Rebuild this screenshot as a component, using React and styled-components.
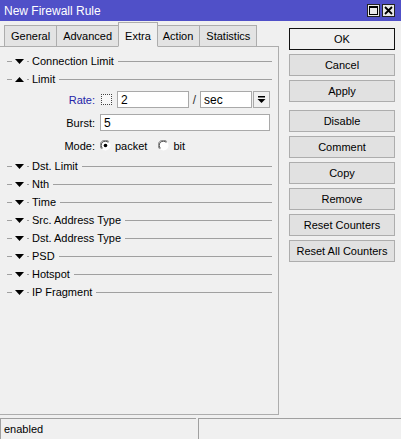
import React from 'react';
import styled, { createGlobalStyle } from 'styled-components';

const GlobalStyle = createGlobalStyle`
  html, body {
    margin: 0;
    padding: 0;
    background: #f0f0f0;
  }
  * {
    box-sizing: border-box;
  }
`;

const Window = styled.div`
  width: 401px;
  height: 439px;
  display: flex;
  flex-direction: column;
  background: #f0f0f0;
  font-family: 'Liberation Sans', Arial, sans-serif;
  font-size: 11px;
  color: #000;
  overflow: hidden;
`;

const TitleBar = styled.div`
  height: 21px;
  flex: none;
  display: flex;
  align-items: center;
  justify-content: space-between;
  padding: 0 6px 0 4px;
  background: #5050c8;
  color: #fff;
  font-size: 12px;
`;

const TitleButtons = styled.div`
  display: flex;
  gap: 2px;
`;

const TitleButton = styled.div`
  width: 13px;
  height: 13px;
  display: flex;
  align-items: center;
  justify-content: center;
  background: #e8e8e8;
  border: 1px solid #222;
`;

const Body = styled.div`
  flex: 1;
  display: flex;
  min-height: 0;
`;

const LeftColumn = styled.div`
  width: 279px;
  display: flex;
  flex-direction: column;
  padding-top: 1px;
`;

const TabStrip = styled.div`
  height: 25px;
  display: flex;
  align-items: flex-end;
  padding-left: 4px;
  position: relative;
  z-index: 1;
  margin-bottom: -1px;
`;

const Tab = styled.div`
  height: ${({ active }) => (active ? '25px' : '22px')};
  padding: ${({ active }) => (active ? '2px 6px 0' : '0 6px')};
  margin: ${({ active }) => (active ? '0 -1px' : '0')};
  display: flex;
  align-items: center;
  background: ${({ active }) => (active ? '#f0f0f0' : '#e3e3e3')};
  border: 1px solid #adadad;
  border-bottom: ${({ active }) => (active ? '1px solid #f0f0f0' : '1px solid #adadad')};
  border-left: ${({ first, active }) => (first || active ? '1px solid #adadad' : 'none')};
  position: relative;
  z-index: ${({ active }) => (active ? 2 : 1)};
`;

const Panel = styled.div`
  flex: 1;
  border: 1px solid #adadad;
  border-left: none;
  padding-top: 5px;
  display: flex;
  flex-direction: column;
`;

const SectionHead = styled.div`
  height: 18px;
  display: flex;
  align-items: center;
  padding: 0 6px 0 7px;
`;

const Dash = styled.div`
  width: ${({ w }) => w}px;
  height: 1px;
  background: #a0a0a0;
  margin: 0 ${({ mr }) => mr || 0}px 0 ${({ ml }) => ml || 0}px;
  flex: ${({ grow }) => (grow ? 1 : 'none')};
`;

const SectionTitle = styled.span`
  margin: 0 4px 0 3px;
  white-space: nowrap;
`;

const Field = styled.div`
  height: 23px;
  display: flex;
  align-items: center;
`;

const Label = styled.span`
  width: 96px;
  text-align: right;
  padding-right: 1px;
  color: ${({ blue }) => (blue ? '#2424a8' : '#000')};
  margin-right: 4px;
`;

const Input = styled.div`
  width: ${({ w }) => w}px;
  height: 17px;
  background: #fff;
  border: 1px solid #a9a9a9;
  padding: 1px 3px 0;
  display: flex;
  align-items: center;
  font-size: 12px;
`;

const DottedBox = styled.div`
  width: 11px;
  height: 11px;
  margin: 0 5px 0 1px;
  border: 1px dotted #444;
  background: #f7f7f7;
`;

const Slash = styled.span`
  width: 11px;
  text-align: center;
  color: #333;
  font-size: 12px;
`;

const DropButton = styled.div`
  width: 17px;
  height: 17px;
  margin-left: 1px;
  border: 1px solid #a9a9a9;
  background: #f0f0f0;
  display: flex;
  align-items: center;
  justify-content: center;
`;

const RadioLabel = styled.span`
  margin: 0 ${({ mr }) => mr || 0}px 0 4px;
`;

const ButtonColumn = styled.div`
  width: 106px;
  margin-left: 10px;
  padding-top: 7px;
  display: flex;
  flex-direction: column;
  gap: 4px;
`;

const Button = styled.div`
  height: 22px;
  display: flex;
  align-items: center;
  justify-content: center;
  background: ${({ primary }) => (primary ? '#f0f0f0' : '#e1e1e1')};
  border: 1px solid ${({ primary }) => (primary ? '#111' : '#adadad')};
  font-size: 11px;
  margin-top: ${({ spaced }) => (spaced ? '4px' : '0')};
`;

const StatusBar = styled.div`
  height: 21px;
  flex: none;
  display: flex;
  gap: 2px;
  margin-top: 3px;
`;

const StatusCell = styled.div`
  width: ${({ w }) => (w ? `${w}px` : 'auto')};
  flex: ${({ w }) => (w ? 'none' : 1)};
  border-top: 1px solid #a0a0a0;
  border-left: 1px solid #a0a0a0;
  padding-left: 3px;
  display: flex;
  align-items: center;
`;

const Arrow = ({ up }) => (
  <svg width="9" height="5" viewBox="0 0 9 5">
    <path d={up ? 'M4.5 0 L9 5 L0 5 Z' : 'M0 0 L9 0 L4.5 5 Z'} fill="#000" />
  </svg>
);

const Radio = ({ checked }) => (
  <svg width="11" height="11" viewBox="0 0 11 11">
    <circle cx="5.5" cy="5.5" r="5" fill="#fff" />
    <path d="M1.6 8.9 A5 5 0 0 1 8.9 1.6" fill="none" stroke="#808080" strokeWidth="1" />
    <path d="M2.4 8.3 A4 4 0 0 1 8.3 2.4" fill="none" stroke="#404040" strokeWidth="1" />
    {checked && <circle cx="5.5" cy="5.5" r="1.8" fill="#000" />}
  </svg>
);

const Section = ({ title, open }) => (
  <SectionHead>
    <Dash w={5} mr={3} />
    <Arrow up={open} />
    <Dash w={2} ml={3} />
    <SectionTitle>{title}</SectionTitle>
    <Dash grow />
  </SectionHead>
);

const tabs = ['General', 'Advanced', 'Extra', 'Action', 'Statistics'];
const lower = ['Dst. Limit', 'Nth', 'Time', 'Src. Address Type', 'Dst. Address Type', 'PSD', 'Hotspot', 'IP Fragment'];
const buttons = ['OK', 'Cancel', 'Apply', 'Disable', 'Comment', 'Copy', 'Remove', 'Reset Counters', 'Reset All Counters'];

export default function App() {
  return (
    <Window>
      <GlobalStyle />
      <TitleBar>
        <span>New Firewall Rule</span>
        <TitleButtons>
          <TitleButton>
            <svg width="9" height="9" viewBox="0 0 9 9">
              <rect x="0.5" y="0.5" width="8" height="8" fill="none" stroke="#000" />
              <line x1="0" y1="1.5" x2="9" y2="1.5" stroke="#000" />
            </svg>
          </TitleButton>
          <TitleButton>
            <svg width="9" height="9" viewBox="0 0 9 9">
              <path d="M1 1 L8 8 M8 1 L1 8" stroke="#000" strokeWidth="1.8" />
            </svg>
          </TitleButton>
        </TitleButtons>
      </TitleBar>
      <Body>
        <LeftColumn>
          <TabStrip>
            {tabs.map((t, i) => (
              <Tab key={t} first={i === 0} active={t === 'Extra'}>
                {t}
              </Tab>
            ))}
          </TabStrip>
          <Panel>
            <Section title="Connection Limit" />
            <Section title="Limit" open />
            <Field>
              <Label blue>Rate:</Label>
              <DottedBox />
              <Input w={72}>2</Input>
              <Slash>/</Slash>
              <Input w={52}>sec</Input>
              <DropButton>
                <svg width="9" height="9" viewBox="0 0 9 9">
                  <rect x="1" y="1" width="7" height="1.5" fill="#000" />
                  <path d="M0.5 4 L8.5 4 L4.5 8 Z" fill="#000" />
                </svg>
              </DropButton>
            </Field>
            <Field>
              <Label>Burst:</Label>
              <Input w={170}>5</Input>
            </Field>
            <Field>
              <Label>Mode:</Label>
              <Radio checked />
              <RadioLabel mr={11}>packet</RadioLabel>
              <Radio />
              <RadioLabel>bit</RadioLabel>
            </Field>
            {lower.map((t) => (
              <Section key={t} title={t} />
            ))}
          </Panel>
        </LeftColumn>
        <ButtonColumn>
          {buttons.map((b) => (
            <Button key={b} primary={b === 'OK'} spaced={b === 'Disable'}>
              {b}
            </Button>
          ))}
        </ButtonColumn>
      </Body>
      <StatusBar>
        <StatusCell w={196}>enabled</StatusCell>
        <StatusCell />
      </StatusBar>
    </Window>
  );
}
